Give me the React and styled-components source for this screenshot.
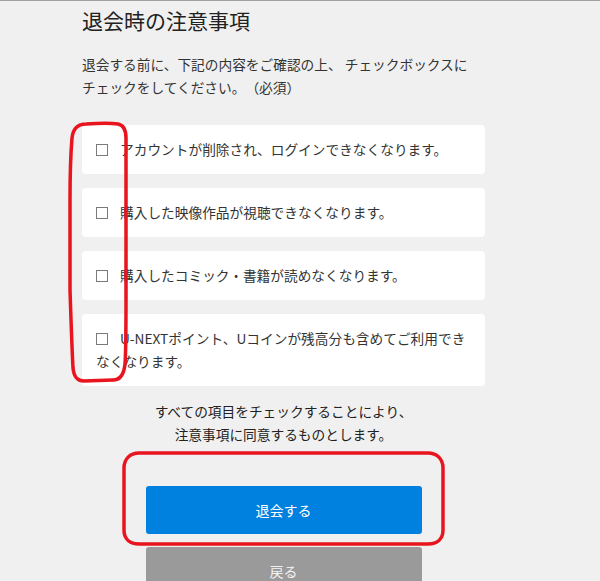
import styled, { createGlobalStyle } from 'styled-components';

const GlobalStyle = createGlobalStyle`
	html, body {
		margin: 0;
		padding: 0;
		background: #f0f0f0;
	}
	* {
		box-sizing: border-box;
	}
`;

const items = [
	'アカウントが削除され、ログインできなくなります。',
	'購入した映像作品が視聴できなくなります。',
	'購入したコミック・書籍が読めなくなります。',
	'U-NEXTポイント、Uコインが残高分も含めてご利用できなくなります。',
];

const App = () => {
	return (
		<Page>
			<GlobalStyle />
			<Section>
				<Title>退会時の注意事項</Title>
				<Lead>
					退会する前に、下記の内容をご確認の上、 チェックボックスに
					<br />
					チェックをしてください。（必須）
				</Lead>
				<CheckList>
					{items.map((text) => (
						<CheckItem key={text}>
							<Box />
							{text}
						</CheckItem>
					))}
				</CheckList>
				<Note>
					すべての項目をチェックすることにより、
					<br />
					注意事項に同意するものとします。
				</Note>
				<Buttons>
					<Button $variant='primary'>退会する</Button>
					<Button $variant='back'>戻る</Button>
				</Buttons>
			</Section>
			<Marks viewBox='0 0 600 581' width='600' height='581'>
				<path
					d='M86 124 C100 123 112 123 118 124 C123 125 126 130 126 138 L126 300 C126 330 126 352 125 364 C124 374 121 380 113 380 L84 381 C77 381 74 377 73 368 C72 350 71 320 70 290 L70 200 C70 170 71 150 72 138 C73 129 77 124 86 124 Z'
				/>
				<path d='M139 453 L428 453 C437 453 443 459 443 468 L443 530 C443 539 437 544 428 544 L139 544 C130 544 124 539 124 530 L124 468 C124 459 130 453 139 453 Z' />
			</Marks>
		</Page>
	);
};

const Page = styled.div`
	position: relative;
	width: 600px;
	height: 581px;
	overflow: hidden;
	background: #f0f0f0;
	border-top: 1px solid #a0a0a0;
	font-family: 'Noto Sans CJK JP', 'Noto Sans', sans-serif;
	text-spacing-trim: space-all;
	color: #333;
`;

const Section = styled.div`
	width: 403px;
	margin-left: 82px;
	padding-top: 4px;
`;

const Title = styled.h2`
	margin: 0;
	font-size: 21px;
	line-height: 30px;
	font-weight: normal;
	color: #222;
`;

const Lead = styled.p`
	margin: 18px 0 0;
	font-size: 13.7px;
	line-height: 22.5px;
`;

const CheckList = styled.div`
	display: flex;
	flex-direction: column;
	gap: 14px;
	margin-top: 27px;
`;

const CheckItem = styled.label`
	display: block;
	background: #fff;
	border-radius: 4px;
	padding: 13px 14px;
	font-size: 13.7px;
	line-height: 23px;
	color: #333;
`;

const Box = styled.span`
	display: inline-block;
	width: 12px;
	height: 12px;
	margin-right: 12px;
	border: 1px solid #7a7a7a;
	background: #fff;
	vertical-align: -1px;
`;

const Note = styled.p`
	margin: 14px 0 0;
	text-align: center;
	font-size: 13.7px;
	line-height: 22.5px;
	color: #222;
`;

const Buttons = styled.div`
	display: flex;
	flex-direction: column;
	align-items: center;
	gap: 13px;
	margin-top: 41px;
`;

const Button = styled.button`
	width: 276px;
	height: 48px;
	border: none;
	border-radius: 3px;
	font-family: inherit;
	font-size: 14px;
	color: ${(p) => (p.$variant === 'primary' ? '#fff' : '#f2f2f2')};
	background: ${(p) => (p.$variant === 'primary' ? '#0080df' : '#9a9a9a')};
`;

const Marks = styled.svg`
	position: absolute;
	top: -1px;
	left: 0;
	pointer-events: none;
	fill: none;
	stroke: #e8141e;
	stroke-width: 3.5;
	stroke-linejoin: round;
`;

export default App;
